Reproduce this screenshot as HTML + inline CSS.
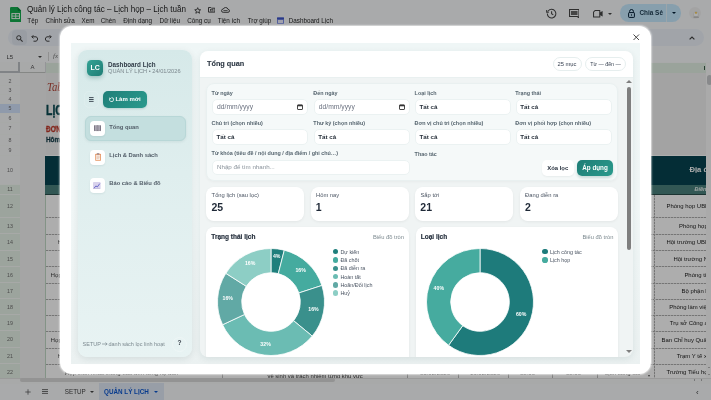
<!DOCTYPE html>
<html><head><meta charset="utf-8">
<style>
*{box-sizing:border-box;margin:0;padding:0}
html,body{width:711px;height:400px;overflow:hidden}
body{position:relative;background:#f9fbfd;font-family:"Liberation Sans",sans-serif;color:#1f1f1f}
.a{position:absolute}
.nw{white-space:nowrap}
#sheet{position:absolute;left:0;top:0;width:711px;height:400px;overflow:hidden}
#overlay{position:absolute;left:0;top:0;width:711px;height:400px;background:rgba(0,0,0,0.32)}
</style></head><body>
<div id="wrap" style="position:absolute;left:0;top:0;width:711px;height:400px;will-change:transform">
<div id="sheet">
  <!-- logo -->
  <svg class="a" style="left:9.6px;top:6.7px" width="11.5" height="15.3" viewBox="0 0 11.5 15.3"><path d="M0 1.2Q0 0 1.2 0H7.6L11.5 3.9V14.1Q11.5 15.3 10.3 15.3H1.2Q0 15.3 0 14.1Z" fill="#14ad4f"/><path d="M7.6 0L11.5 3.9H8.6Q7.6 3.9 7.6 2.9Z" fill="#0c8a3c"/><rect x="1.9" y="6.6" width="7.6" height="5" fill="none" stroke="#f2fbf5" stroke-width="1"/><path d="M1.9 9.1H9.5M5.7 6.6V11.6" stroke="#f2fbf5" stroke-width="0.9"/></svg>
  <div class="a nw" style="left:27px;top:4.3px;font-size:8.9px;line-height:11px;color:#1f1f1f;transform:scaleX(.91);transform-origin:0 0">Quản lý Lịch công tác – Lịch họp – Lịch tuần</div>
  <!-- star folder cloud -->
  <svg class="a" style="left:193.5px;top:6.8px" width="7.4" height="7" viewBox="0 0 10 9.5"><path d="M5 0.9L6.1 3.6L9 3.8L6.8 5.6L7.5 8.5L5 6.9L2.5 8.5L3.2 5.6L1 3.8L3.9 3.6Z" fill="none" stroke="#3a3a3a" stroke-width="1.2" stroke-linejoin="round"/></svg>
  <svg class="a" style="left:207.6px;top:7.4px" width="7.4" height="5.6" viewBox="0 0 7.4 5.6"><path d="M0.5 0.5H2.8L3.5 1.2H6.9V5.1H0.5Z" fill="none" stroke="#3a3a3a" stroke-width="0.95"/><rect x="2.4" y="2.4" width="2.6" height="1.6" fill="none" stroke="#3a3a3a" stroke-width=".6"/></svg>
  <svg class="a" style="left:221.2px;top:7.2px" width="9" height="5.8" viewBox="0 0 9 5.8"><path d="M2.2 5.3H7Q8.5 5.3 8.5 3.8Q8.5 2.5 7.1 2.4Q6.6 0.5 4.6 0.5Q3 0.5 2.3 2Q0.5 2.2 0.5 3.7Q0.5 5.3 2.2 5.3Z" fill="none" stroke="#3a3a3a" stroke-width="0.95"/><path d="M2.4 3.6H6.6" stroke="#3a3a3a" stroke-width=".8"/></svg>
  <!-- menu -->
  <div class="a nw" style="top:16.5px;font-size:6.3px;line-height:8px;color:#1f1f1f;left:0;width:400px">
    <span class="a" style="left:27.3px">Tệp</span>
    <span class="a" style="left:45.6px">Chỉnh sửa</span>
    <span class="a" style="left:81.5px">Xem</span>
    <span class="a" style="left:100.8px">Chèn</span>
    <span class="a" style="left:123.3px">Định dạng</span>
    <span class="a" style="left:159.6px">Dữ liệu</span>
    <span class="a" style="left:187.2px">Công cụ</span>
    <span class="a" style="left:217.8px">Tiện ích</span>
    <span class="a" style="left:247.7px">Trợ giúp</span>
    <span class="a" style="left:288.8px">Dashboard Lịch</span>
  </div>
  <svg class="a" style="left:277px;top:16.5px" width="7" height="7" viewBox="0 0 7 7"><rect x="0" y="0.5" width="7" height="6.5" rx="1" fill="#7b8ee6"/><rect x="0" y="0.5" width="7" height="1.8" fill="#3d54c9"/><rect x="1" y="3" width="5" height="3.2" fill="#eef"/></svg>
  <!-- right icons -->
  <svg class="a" style="left:546px;top:8px" width="11" height="11" viewBox="0 0 11 11"><path d="M2.2 3A4.3 4.3 0 1 1 1.3 5.6" fill="none" stroke="#444" stroke-width="1.05"/><path d="M0.7 2V4.1H2.8" fill="none" stroke="#444" stroke-width="1.05"/><path d="M5.6 3.2V5.7L7.3 6.9" fill="none" stroke="#444" stroke-width="1.05"/></svg>
  <svg class="a" style="left:568.5px;top:8.7px" width="10.5" height="9.5" viewBox="0 0 10.5 9.5"><path d="M0.55 0.55H9.95V8.9L8.4 7.5H0.55Z" fill="none" stroke="#444" stroke-width="1.05"/><rect x="2" y="2" width="6.5" height="4" fill="#666"/></svg>
  <svg class="a" style="left:592.5px;top:10px" width="10" height="7.5" viewBox="0 0 10 7.5"><path d="M2 0.55H6.8V6.95H0.55V2Z" fill="none" stroke="#444" stroke-width="1.05" stroke-linejoin="round"/><path d="M6.8 2.6L9.6 1V6.5L6.8 4.9" fill="#444"/></svg>
  <div class="a" style="left:607.5px;top:12.6px;width:0;height:0;border-left:2px solid transparent;border-right:2px solid transparent;border-top:2.2px solid #444"></div>
  <div class="a" style="left:620.1px;top:4.3px;width:60.7px;height:17.3px;border-radius:8.65px;background:#c8ebff"></div>
  <div class="a" style="left:665.8px;top:4.4px;width:0.9px;height:17.2px;background:#e6f3fb"></div>
  <svg class="a" style="left:628px;top:8.5px" width="7" height="9" viewBox="0 0 7 9"><path d="M1.6 3.6V2.4A1.9 1.9 0 0 1 5.4 2.4V3.6" fill="none" stroke="#001d35" stroke-width="1"/><rect x="0.6" y="3.6" width="5.8" height="4.8" rx=".6" fill="none" stroke="#001d35" stroke-width="1"/><circle cx="3.5" cy="6" r=".7" fill="#001d35"/></svg>
  <div class="a nw" style="left:639.5px;top:9px;font-size:6.4px;line-height:8px;font-weight:700;color:#1c3a50">Chia Sẻ</div>
  <div class="a" style="left:671.5px;top:12.2px;width:0;height:0;border-left:2px solid transparent;border-right:2px solid transparent;border-top:2.2px solid #001d35"></div>
  <div class="a" style="left:689.4px;top:7.3px;width:12px;height:12px;border-radius:6px;background:#f1f1f1"></div>
  <svg class="a" style="left:690.5px;top:8.5px" width="10" height="10" viewBox="0 0 10 10"><path d="M3 7.5Q1.5 5 3.5 3Q5 1.5 6.5 3Q8 5 7 7.5Z" fill="#fff" stroke="#cfcfcf" stroke-width=".5"/><circle cx="5" cy="3.8" r=".9" fill="#f2b81d"/><path d="M2.5 8.2H7.8" stroke="#9a9a9a" stroke-width=".7"/></svg>
  <!-- toolbar -->
  <div class="a" style="left:7.7px;top:29.2px;width:695.9px;height:17px;border-radius:8.5px;background:#edf2fa"></div>
  <div class="a" style="left:12px;top:30.2px;width:14.6px;height:15px;border-radius:4px;background:#e2e8f1"></div>
  <svg class="a" style="left:15.6px;top:34.6px" width="7" height="7" viewBox="0 0 7 7"><circle cx="2.8" cy="2.8" r="2.1" fill="none" stroke="#444" stroke-width="1"/><path d="M4.3 4.3L6.6 6.6" stroke="#444" stroke-width="1.1"/></svg>
  <svg class="a" style="left:31px;top:33.6px" width="8" height="8" viewBox="0 0 8 8"><path d="M2.4 1.2L0.8 2.8L2.4 4.4" fill="none" stroke="#444" stroke-width="1"/><path d="M0.8 2.8H5A2.3 2.3 0 0 1 5 7.2H2.5" fill="none" stroke="#444" stroke-width="1"/></svg>
  <svg class="a" style="left:44px;top:33.6px" width="8" height="8" viewBox="0 0 8 8"><path d="M5.6 1.2L7.2 2.8L5.6 4.4" fill="none" stroke="#444" stroke-width="1"/><path d="M7.2 2.8H3A2.3 2.3 0 0 0 3 7.2H5.5" fill="none" stroke="#444" stroke-width="1"/></svg>
  <svg class="a" style="left:688.8px;top:35.8px" width="6" height="4" viewBox="0 0 6 4"><path d="M0.6 3.4L3 1L5.4 3.4" fill="none" stroke="#444" stroke-width="1.2"/></svg>
  <!-- name box row -->
  <div class="a nw" style="left:6.5px;top:52.5px;font-size:6px;line-height:8px;color:#444">L5</div>
  <div class="a" style="left:38px;top:55.5px;width:0;height:0;border-left:2px solid transparent;border-right:2px solid transparent;border-top:2.2px solid #444"></div>
  <div class="a" style="left:47.5px;top:52px;width:0.8px;height:8.5px;background:#d5d5d5"></div>
  <div class="a nw" style="left:53px;top:51.5px;font-size:7px;line-height:9px;color:#777;font-style:italic;font-family:'Liberation Serif',serif">fx</div>
  <!-- column header row -->
  <div class="a" style="left:0;top:62.2px;width:711px;height:11px;background:#f8f9fa;border-bottom:1px solid #c4c7c5"></div>
  <div class="a" style="left:0;top:62.2px;width:20px;height:11px;background:#f8f9fa;border-right:2.5px solid #bdc1c6;border-bottom:2px solid #bdc1c6"></div>
  <div class="a" style="left:20px;top:62.2px;width:25.5px;height:11px;border-right:1px solid #dadce0"></div>
  <div class="a nw" style="left:30.5px;top:64.3px;font-size:6px;line-height:7px;color:#555">A</div>
  <div class="a" style="left:45.5px;top:62.6px;width:660.5px;height:10.6px;background:#e3f1e5"></div>
  <div class="a" style="left:703.6px;top:65.5px;width:0.9px;height:4px;background:#3a5a48"></div>
  <!-- row header column -->
  <div id="rh" class="a" style="left:0;top:73.2px;width:20px;height:310px;background:#f8f9fa;border-right:1px solid #c4c7c5"></div>
  <!-- column A body -->
  <div class="a" style="left:20px;top:73.2px;width:25.5px;height:305px;background:#f3f3f3"></div>
  <div class="a" style="left:44.8px;top:185px;width:1.1px;height:193px;background:#c2d9c6"></div>
  <!-- column B+ body -->
  <div class="a" style="left:46px;top:73.2px;width:660px;height:305px;background:#fff"></div>
  <div class="a" style="left:45.5px;top:73.2px;width:660.5px;height:82.3px;background:#f1f1f1"></div>
  <!-- text content in B -->
  <div class="a nw" style="left:46.8px;top:78.5px;font-size:13px;line-height:16px;color:#b5473a;font-style:italic;font-family:'Liberation Serif',serif;transform:scaleX(.82);transform-origin:0 0">Tab</div>
  <div class="a nw" style="left:46.3px;top:101px;font-size:14.5px;line-height:18px;color:#0b4a52;font-weight:700;-webkit-text-stroke:.45px #0b4a52;transform:scaleX(.72);transform-origin:0 0">LỊCH</div>
  <div class="a nw" style="left:46.3px;top:124.2px;font-size:8.3px;line-height:10px;color:#c0392b;font-weight:700;-webkit-text-stroke:.3px #c0392b;transform:scaleX(.78);transform-origin:0 0">ĐƠN</div>
  <div class="a nw" style="left:46.3px;top:135.3px;font-size:8px;line-height:10px;color:#153e4a;font-weight:700;-webkit-text-stroke:.3px #153e4a;transform:scaleX(.8);transform-origin:0 0">Hôm</div>
  <!-- dark header block -->
  <div class="a" style="left:44.8px;top:155.5px;width:661.2px;height:29.5px;background:#064350"></div>
  <div class="a nw" style="left:689.5px;top:165.2px;font-size:7.6px;line-height:9px;color:#fff;font-weight:700">Địa đ</div>
  <div class="a" style="left:44.8px;top:185px;width:661.2px;height:9.5px;background:#4a807d;border-bottom:1px solid #2a4d4a"></div>
  <div class="a nw" style="left:694.5px;top:186px;font-size:5.5px;line-height:7px;color:#e8f2ef;font-style:italic;font-weight:700">Điền</div>
<div class="a" style="left:0;top:73.20px;width:20px;height:3.00px;background:#f8f9fa;border-bottom:1px solid #f7f9f7"></div>
<div class="a" style="left:0;top:76.20px;width:20px;height:10.00px;background:#f8f9fa;border-bottom:1px solid #f7f9f7"></div>
<div class="a" style="left:0;top:76.20px;width:20px;height:10.00px;line-height:10.00px;font-size:5.3px;color:#707070;text-align:center">2</div>
<div class="a" style="left:0;top:86.20px;width:20px;height:9.00px;background:#f8f9fa;border-bottom:1px solid #f7f9f7"></div>
<div class="a" style="left:0;top:86.20px;width:20px;height:9.00px;line-height:9.00px;font-size:5.3px;color:#707070;text-align:center">3</div>
<div class="a" style="left:0;top:95.20px;width:20px;height:9.00px;background:#f8f9fa;border-bottom:1px solid #f7f9f7"></div>
<div class="a" style="left:0;top:95.20px;width:20px;height:9.00px;line-height:9.00px;font-size:5.3px;color:#707070;text-align:center">4</div>
<div class="a" style="left:0;top:104.20px;width:20px;height:9.50px;background:#d3e3fd;border-bottom:1px solid #f7f9f7"></div>
<div class="a" style="left:0;top:104.20px;width:20px;height:9.50px;line-height:9.50px;font-size:5.3px;color:#707070;text-align:center">5</div>
<div class="a" style="left:0;top:113.70px;width:20px;height:9.30px;background:#f8f9fa;border-bottom:1px solid #f7f9f7"></div>
<div class="a" style="left:0;top:113.70px;width:20px;height:9.30px;line-height:9.30px;font-size:5.3px;color:#707070;text-align:center">6</div>
<div class="a" style="left:0;top:123.00px;width:20px;height:11.50px;background:#f8f9fa;border-bottom:1px solid #f7f9f7"></div>
<div class="a" style="left:0;top:123.00px;width:20px;height:11.50px;line-height:11.50px;font-size:5.3px;color:#707070;text-align:center">7</div>
<div class="a" style="left:0;top:134.50px;width:20px;height:11.50px;background:#f8f9fa;border-bottom:1px solid #f7f9f7"></div>
<div class="a" style="left:0;top:134.50px;width:20px;height:11.50px;line-height:11.50px;font-size:5.3px;color:#707070;text-align:center">8</div>
<div class="a" style="left:0;top:146.00px;width:20px;height:9.50px;background:#f8f9fa;border-bottom:1px solid #f7f9f7"></div>
<div class="a" style="left:0;top:146.00px;width:20px;height:9.50px;line-height:9.50px;font-size:5.3px;color:#707070;text-align:center">9</div>
<div class="a" style="left:0;top:155.50px;width:20px;height:29.50px;background:#f8f9fa;border-bottom:1px solid #f7f9f7"></div>
<div class="a" style="left:0;top:155.50px;width:20px;height:29.50px;line-height:29.50px;font-size:5.3px;color:#707070;text-align:center">10</div>
<div class="a" style="left:0;top:185.00px;width:20px;height:9.50px;background:#e6f2e7;border-bottom:1px solid #f7f9f7"></div>
<div class="a" style="left:0;top:185.00px;width:20px;height:9.50px;line-height:9.50px;font-size:5.3px;color:#707070;text-align:center">11</div>
<div class="a" style="left:0;top:194.50px;width:20px;height:23.00px;background:#e6f2e7;border-bottom:1px solid #f7f9f7"></div>
<div class="a" style="left:0;top:194.50px;width:20px;height:23.00px;line-height:23.00px;font-size:5.3px;color:#707070;text-align:center">12</div>
<div class="a" style="left:0;top:217.50px;width:20px;height:16.75px;background:#e6f2e7;border-bottom:1px solid #f7f9f7"></div>
<div class="a" style="left:0;top:217.50px;width:20px;height:16.75px;line-height:16.75px;font-size:5.3px;color:#707070;text-align:center">13</div>
<div class="a" style="left:0;top:234.25px;width:20px;height:16.25px;background:#e6f2e7;border-bottom:1px solid #f7f9f7"></div>
<div class="a" style="left:0;top:234.25px;width:20px;height:16.25px;line-height:16.25px;font-size:5.3px;color:#707070;text-align:center">14</div>
<div class="a" style="left:0;top:250.50px;width:20px;height:16.00px;background:#e6f2e7;border-bottom:1px solid #f7f9f7"></div>
<div class="a" style="left:0;top:250.50px;width:20px;height:16.00px;line-height:16.00px;font-size:5.3px;color:#707070;text-align:center">15</div>
<div class="a" style="left:0;top:266.50px;width:20px;height:16.75px;background:#e6f2e7;border-bottom:1px solid #f7f9f7"></div>
<div class="a" style="left:0;top:266.50px;width:20px;height:16.75px;line-height:16.75px;font-size:5.3px;color:#707070;text-align:center">16</div>
<div class="a" style="left:0;top:283.25px;width:20px;height:16.05px;background:#e6f2e7;border-bottom:1px solid #f7f9f7"></div>
<div class="a" style="left:0;top:283.25px;width:20px;height:16.05px;line-height:16.05px;font-size:5.3px;color:#707070;text-align:center">17</div>
<div class="a" style="left:0;top:299.30px;width:20px;height:16.00px;background:#e6f2e7;border-bottom:1px solid #f7f9f7"></div>
<div class="a" style="left:0;top:299.30px;width:20px;height:16.00px;line-height:16.00px;font-size:5.3px;color:#707070;text-align:center">18</div>
<div class="a" style="left:0;top:315.30px;width:20px;height:16.10px;background:#e6f2e7;border-bottom:1px solid #f7f9f7"></div>
<div class="a" style="left:0;top:315.30px;width:20px;height:16.10px;line-height:16.10px;font-size:5.3px;color:#707070;text-align:center">19</div>
<div class="a" style="left:0;top:331.40px;width:20px;height:16.60px;background:#e6f2e7;border-bottom:1px solid #f7f9f7"></div>
<div class="a" style="left:0;top:331.40px;width:20px;height:16.60px;line-height:16.60px;font-size:5.3px;color:#707070;text-align:center">20</div>
<div class="a" style="left:0;top:348.00px;width:20px;height:16.00px;background:#e6f2e7;border-bottom:1px solid #f7f9f7"></div>
<div class="a" style="left:0;top:348.00px;width:20px;height:16.00px;line-height:16.00px;font-size:5.3px;color:#707070;text-align:center">21</div>
<div class="a" style="left:0;top:364.00px;width:20px;height:16.50px;background:#e6f2e7;border-bottom:1px solid #f7f9f7"></div>
<div class="a" style="left:0;top:364.00px;width:20px;height:16.50px;line-height:16.50px;font-size:5.3px;color:#707070;text-align:center">22</div>
<div class="a" style="left:46px;top:217px;width:20px;height:1px;background:repeating-linear-gradient(90deg,#adadad 0 2px,#e2e2e2 2px 3px)"></div>
<div class="a" style="left:650px;top:217px;width:56px;height:1px;background:repeating-linear-gradient(90deg,#adadad 0 2px,#e2e2e2 2px 3px)"></div>
<div class="a" style="left:46px;top:234px;width:20px;height:1px;background:repeating-linear-gradient(90deg,#adadad 0 2px,#e2e2e2 2px 3px)"></div>
<div class="a" style="left:650px;top:234px;width:56px;height:1px;background:repeating-linear-gradient(90deg,#adadad 0 2px,#e2e2e2 2px 3px)"></div>
<div class="a" style="left:46px;top:250px;width:20px;height:1px;background:repeating-linear-gradient(90deg,#adadad 0 2px,#e2e2e2 2px 3px)"></div>
<div class="a" style="left:650px;top:250px;width:56px;height:1px;background:repeating-linear-gradient(90deg,#adadad 0 2px,#e2e2e2 2px 3px)"></div>
<div class="a" style="left:46px;top:266px;width:20px;height:1px;background:repeating-linear-gradient(90deg,#adadad 0 2px,#e2e2e2 2px 3px)"></div>
<div class="a" style="left:650px;top:266px;width:56px;height:1px;background:repeating-linear-gradient(90deg,#adadad 0 2px,#e2e2e2 2px 3px)"></div>
<div class="a" style="left:46px;top:283px;width:20px;height:1px;background:repeating-linear-gradient(90deg,#adadad 0 2px,#e2e2e2 2px 3px)"></div>
<div class="a" style="left:650px;top:283px;width:56px;height:1px;background:repeating-linear-gradient(90deg,#adadad 0 2px,#e2e2e2 2px 3px)"></div>
<div class="a" style="left:46px;top:299px;width:20px;height:1px;background:repeating-linear-gradient(90deg,#adadad 0 2px,#e2e2e2 2px 3px)"></div>
<div class="a" style="left:650px;top:299px;width:56px;height:1px;background:repeating-linear-gradient(90deg,#adadad 0 2px,#e2e2e2 2px 3px)"></div>
<div class="a" style="left:46px;top:315px;width:20px;height:1px;background:repeating-linear-gradient(90deg,#adadad 0 2px,#e2e2e2 2px 3px)"></div>
<div class="a" style="left:650px;top:315px;width:56px;height:1px;background:repeating-linear-gradient(90deg,#adadad 0 2px,#e2e2e2 2px 3px)"></div>
<div class="a" style="left:46px;top:331px;width:20px;height:1px;background:repeating-linear-gradient(90deg,#adadad 0 2px,#e2e2e2 2px 3px)"></div>
<div class="a" style="left:650px;top:331px;width:56px;height:1px;background:repeating-linear-gradient(90deg,#adadad 0 2px,#e2e2e2 2px 3px)"></div>
<div class="a" style="left:46px;top:348px;width:20px;height:1px;background:repeating-linear-gradient(90deg,#adadad 0 2px,#e2e2e2 2px 3px)"></div>
<div class="a" style="left:650px;top:348px;width:56px;height:1px;background:repeating-linear-gradient(90deg,#adadad 0 2px,#e2e2e2 2px 3px)"></div>
<div class="a" style="left:46px;top:364px;width:20px;height:1px;background:repeating-linear-gradient(90deg,#adadad 0 2px,#e2e2e2 2px 3px)"></div>
<div class="a" style="left:650px;top:364px;width:56px;height:1px;background:repeating-linear-gradient(90deg,#adadad 0 2px,#e2e2e2 2px 3px)"></div>
<div class="a" style="left:46px;top:380px;width:20px;height:1px;background:repeating-linear-gradient(90deg,#adadad 0 2px,#e2e2e2 2px 3px)"></div>
<div class="a" style="left:650px;top:380px;width:56px;height:1px;background:repeating-linear-gradient(90deg,#adadad 0 2px,#e2e2e2 2px 3px)"></div>
<div class="a" style="left:654px;top:194.5px;width:1px;height:184px;background:repeating-linear-gradient(180deg,#adadad 0 2px,#e2e2e2 2px 3px)"></div>
<div class="a" style="left:0;top:0;width:706px;height:378px;overflow:hidden">
<div class="a nw" style="left:666.5px;top:202.00px;font-size:5.95px;line-height:8px;color:#222">Phòng họp UBN</div>
<div class="a nw" style="left:679px;top:221.88px;font-size:5.95px;line-height:8px;color:#222">Phòng họp</div>
<div class="a nw" style="left:666.5px;top:238.38px;font-size:5.95px;line-height:8px;color:#222">Hội trường UBN</div>
<div class="a nw" style="left:673.4px;top:254.50px;font-size:5.95px;line-height:8px;color:#222">Hội trường N</div>
<div class="a nw" style="left:684.4px;top:270.88px;font-size:5.95px;line-height:8px;color:#222">Phòng ti</div>
<div class="a nw" style="left:681.6px;top:287.27px;font-size:5.95px;line-height:8px;color:#222">Bộ phận l</div>
<div class="a nw" style="left:669.3px;top:303.30px;font-size:5.95px;line-height:8px;color:#222">Phòng làm việc</div>
<div class="a nw" style="left:669.8px;top:319.35px;font-size:5.95px;line-height:8px;color:#222">Trụ sở Công an</div>
<div class="a nw" style="left:661.5px;top:335.70px;font-size:5.95px;line-height:8px;color:#222">Ban Chỉ huy Quân</div>
<div class="a nw" style="left:676.7px;top:352.00px;font-size:5.95px;line-height:8px;color:#222">Trạm Y tế x</div>
<div class="a nw" style="left:666.5px;top:368.25px;font-size:5.95px;line-height:8px;color:#222">Trường Tiểu học</div>
<div class="a nw" style="left:57.5px;top:238.4px;font-size:6.2px;line-height:8px;color:#444">Họp</div>
<div class="a nw" style="left:50.5px;top:270.9px;font-size:6.2px;line-height:8px;color:#444">Họp</div>
<div class="a nw" style="left:50.5px;top:335.7px;font-size:6.2px;line-height:8px;color:#444">Họp</div>
<div class="a nw" style="left:57.5px;top:352px;font-size:6.2px;line-height:8px;color:#444">Họp</div>
<div class="a" style="left:60px;top:364px;width:162px;height:14px;overflow:hidden"><div class="a nw" style="left:5px;top:5px;font-size:6px;line-height:8px;color:#333">Họp thôn nhắc thông báo đến từng hộ dân</div></div>
<div class="a" style="left:222px;top:372px;width:1px;height:6px;background:#bbb"></div>
<div class="a nw" style="left:267.5px;top:372.2px;font-size:5.9px;line-height:8px;color:#333">vệ sinh và trách nhiệm từng khu vực</div>
<div class="a nw" style="left:420px;top:368.5px;font-size:6px;line-height:8px;color:#333">01/02/2026</div>
<div class="a nw" style="left:470px;top:368.5px;font-size:6px;line-height:8px;color:#333">16/02/2026</div>
<div class="a nw" style="left:520px;top:368.5px;font-size:6px;line-height:8px;color:#333">08:00</div>
<div class="a nw" style="left:566px;top:368.5px;font-size:6px;line-height:8px;color:#333">08:00</div>
<div class="a nw" style="left:605px;top:368.5px;font-size:6px;line-height:8px;color:#333">Lịch công tác</div>
<div class="a" style="left:406.6px;top:372px;width:1px;height:6px;background:#bbb"></div>
<div class="a" style="left:458px;top:372px;width:1px;height:6px;background:#bbb"></div>
<div class="a" style="left:507.6px;top:372px;width:1px;height:6px;background:#bbb"></div>
<div class="a" style="left:551.7px;top:372px;width:1px;height:6px;background:#bbb"></div>
<div class="a" style="left:596.8px;top:372px;width:1px;height:6px;background:#bbb"></div>
<div class="a" style="left:647.5px;top:374.5px;width:0;height:0;border-left:1.8px solid transparent;border-right:1.8px solid transparent;border-top:2px solid #555"></div>
</div>
<div class="a" style="left:706px;top:62.6px;width:5px;height:315px;background:#fbfbfb"></div>
<div class="a" style="left:706.7px;top:74.7px;width:5px;height:10.6px;border-radius:2.5px;background:#c9cbcd"></div>
<div class="a" style="left:0;top:377.5px;width:711px;height:6px;background:#f8f9fa;border-top:1px solid #e3e3e3"></div>
<div class="a" style="left:20px;top:378.3px;width:315px;height:4.2px;border-radius:2.1px;background:#d9d9d9"></div>
<div class="a" style="left:693.5px;top:379.3px;width:0;height:0;border-top:1.3px solid transparent;border-bottom:1.3px solid transparent;border-right:1.6px solid #666"></div>
<div class="a" style="left:700.5px;top:379.3px;width:0;height:0;border-top:1.3px solid transparent;border-bottom:1.3px solid transparent;border-left:1.6px solid #666"></div>
<div class="a" style="left:707.8px;top:366.5px;width:0;height:0;border-left:1.3px solid transparent;border-right:1.3px solid transparent;border-bottom:1.6px solid #777"></div>
<div class="a" style="left:707.8px;top:373.5px;width:0;height:0;border-left:1.3px solid transparent;border-right:1.3px solid transparent;border-top:1.6px solid #777"></div>
<div class="a" style="left:0;top:383.5px;width:711px;height:16.5px;background:#f9fbfd"></div>
<svg class="a" style="left:24.6px;top:388.5px" width="6" height="6" viewBox="0 0 6 6"><path d="M3 0.3V5.7M0.3 3H5.7" stroke="#555" stroke-width=".75"/></svg>
<svg class="a" style="left:41.5px;top:388.9px" width="6" height="5" viewBox="0 0 6 5"><path d="M0 0.6H6M0 2.5H6M0 4.4H6" stroke="#555" stroke-width=".85"/></svg>
<div class="a nw" style="left:64.8px;top:387.6px;font-size:6.3px;line-height:8px;color:#444">SETUP</div>
<div class="a" style="left:89.5px;top:390.8px;width:0;height:0;border-left:2px solid transparent;border-right:2px solid transparent;border-top:2.2px solid #444"></div>
<div class="a" style="left:99.4px;top:383.4px;width:64.2px;height:16.6px;background:#e1e9f7"></div>
<div class="a nw" style="left:104px;top:387.5px;font-size:6.3px;line-height:8px;color:#0b57d0;font-weight:700">QUẢN LÝ LỊCH</div>
<div class="a" style="left:154.4px;top:390.6px;width:0;height:0;border-left:2px solid transparent;border-right:2px solid transparent;border-top:2.2px solid #0b57d0"></div>
<div class="a nw" style="left:696px;top:388px;font-size:8px;line-height:9px;color:#444">‹</div>
</div>
<div id="overlay"></div>
<div class="a" style="left:60.2px;top:25.8px;width:590.4px;height:348.3px;background:#fff;border-radius:12px;box-shadow:0 0 1.5px 0.6px rgba(255,255,255,.55)"></div>
<div class="a" style="left:70.5px;top:43px;width:569.5px;height:320.5px;background:linear-gradient(180deg,#eff6f6 0%,#f1f7f7 50%,#ebf1f1 100%)"></div>
<svg class="a" style="left:633px;top:33.5px" width="6.5" height="6.5" viewBox="0 0 6.5 6.5"><path d="M0.5 0.5L6 6M6 0.5L0.5 6" stroke="#3c3c3c" stroke-width="0.95"/></svg>
<div class="a" style="left:77.5px;top:50px;width:114px;height:306.5px;border-radius:9px;background:linear-gradient(180deg,#d6e9e9 0%,#dfeeee 40%,#e8f3f3 100%);box-shadow:0 2px 7px rgba(0,50,50,.10)"></div>
<div class="a" style="left:87.4px;top:60px;width:15.6px;height:15.6px;border-radius:4.5px;background:linear-gradient(135deg,#34a395,#1f7d75);box-shadow:0 2px 4px rgba(20,100,90,.3)"></div>
<div class="a nw" style="left:87.4px;top:63.8px;width:15.6px;text-align:center;font-size:7px;line-height:8px;font-weight:700;color:#fff">LC</div>
<div class="a nw" style="left:108px;top:61px;font-size:6.3px;line-height:8px;font-weight:700;color:#2f3a46">Dashboard Lịch</div>
<div class="a nw" style="left:108px;top:67.2px;font-size:5.65px;line-height:8px;color:#7b878d">QUẢN LÝ LỊCH • 24/01/2026</div>
<div class="a" style="left:84px;top:91px;width:15px;height:16.5px;border-radius:5px;border:1px solid rgba(255,255,255,.12)"></div>
<svg class="a" style="left:89.3px;top:96.8px" width="4.6" height="5" viewBox="0 0 4.6 5"><path d="M0 0.6H4.6M0 2.5H4.6M0 4.4H4.6" stroke="#3a4550" stroke-width="0.95"/></svg>
<div class="a" style="left:103.4px;top:91px;width:43.2px;height:16.6px;border-radius:5px;background:linear-gradient(135deg,#1f7f78,#2a9a8d);box-shadow:0 1px 2px rgba(20,100,90,.18)"></div>
<div class="a nw" style="left:115.4px;top:95.2px;font-size:6px;line-height:8px;font-weight:700;color:#fff">Làm mới</div>
<svg class="a" style="left:109px;top:96.6px" width="5" height="5" viewBox="0 0 5 5"><path d="M0.9 1.5A2 2 0 1 0 2.5 0.6" fill="none" stroke="#fff" stroke-width="0.8"/><path d="M0.2 0.5L1.1 2L2.2 0.9" fill="none" stroke="#fff" stroke-width="0.7"/></svg>
<div class="a" style="left:85px;top:116.25px;width:100.5px;height:24.25px;border-radius:6px;background:#c4dfdf;border:1px solid #b8d7d7;box-shadow:0 1px 3px rgba(0,70,70,.08)"></div>
<div class="a" style="left:90px;top:121px;width:14.5px;height:14.5px;border-radius:4px;background:#fff;box-shadow:0 1px 2px rgba(0,60,60,.08)"></div>
<div class="a nw" style="left:109.25px;top:123.3px;font-size:5.8px;line-height:8px;font-weight:700;color:#525d68">Tổng quan</div>
<div class="a" style="left:90px;top:150px;width:14.5px;height:14.5px;border-radius:4px;background:#fff;box-shadow:0 1px 2px rgba(0,60,60,.08)"></div>
<div class="a nw" style="left:109.25px;top:151.4px;font-size:5.8px;line-height:8px;font-weight:700;color:#525d68">Lịch &amp; Danh sách</div>
<div class="a" style="left:90px;top:178px;width:14.5px;height:14.5px;border-radius:4px;background:#fff;box-shadow:0 1px 2px rgba(0,60,60,.08)"></div>
<div class="a nw" style="left:109.25px;top:179.1px;font-size:5.8px;line-height:8px;font-weight:700;color:#525d68">Báo cáo &amp; Biểu đồ</div>
<svg class="a" style="left:93.9px;top:125.4px" width="7" height="6.2" viewBox="0 0 7 5.6" preserveAspectRatio="none"><path d="M0 0.6L0.7 0L1.4 0.6L2.1 0L2.8 0.6L3.5 0L4.2 0.6L4.9 0L5.6 0.6L6.3 0L7 0.6V5L6.3 5.6L5.6 5L4.9 5.6L4.2 5L3.5 5.6L2.8 5L2.1 5.6L1.4 5L0.7 5.6L0 5Z" fill="#77717f"/><path d="M1.4 0.8V4.8M2.8 0.8V4.8M4.2 0.8V4.8M5.6 0.8V4.8" stroke="#d6d1da" stroke-width=".6"/></svg>
<svg class="a" style="left:94.6px;top:153px" width="6.2" height="8.2" viewBox="0 0 6.2 8.2"><rect x="0.35" y="0.8" width="5.5" height="7.05" rx=".7" fill="#e2844a"/><rect x="1.05" y="1.7" width="4.1" height="5.5" fill="#f7ece3"/><rect x="1.9" y="0.2" width="2.4" height="1.4" rx=".4" fill="#8b8290"/><path d="M1.6 3.2H4.6M1.6 4.4H4.6M1.6 5.6H3.8" stroke="#d9a890" stroke-width=".45"/></svg>
<svg class="a" style="left:93.4px;top:182px" width="7.6" height="7.4" viewBox="0 0 7.6 7.4"><rect x="0" y="0" width="7.6" height="7.4" rx=".9" fill="#d9d2ec"/><path d="M1 6.3L2.9 3.9L4.3 5L6.8 1.6" fill="none" stroke="#5a58c4" stroke-width=".85"/><path d="M0.8 6.6H6.8" stroke="#a9a3c8" stroke-width=".4"/></svg>
<div class="a nw" style="left:82.6px;top:340px;font-size:5.5px;line-height:8px;color:#7d8a90">SETUP &nbsp;&nbsp;&nbsp;&nbsp;danh sách lọc linh hoạt</div>
<svg class="a" style="left:102.3px;top:342px" width="6" height="4" viewBox="0 0 6 4"><path d="M0 2H5M3.4 0.6L5.2 2L3.4 3.4" fill="none" stroke="#7d8a90" stroke-width=".7"/></svg>
<div class="a" style="left:172px;top:336.5px;width:15px;height:15px;border-radius:7.5px;border:1px solid rgba(255,255,255,.25)"></div>
<div class="a nw" style="left:172px;top:339.2px;width:15px;text-align:center;font-size:6.6px;line-height:8px;font-weight:700;color:#3a424c">?</div>
<div class="a" style="left:200px;top:50.5px;width:433px;height:306.5px;border-radius:8px;background:#f0f4f4;box-shadow:0 2px 7px rgba(0,50,50,.09);overflow:hidden">
<div class="a" style="left:0;top:0;width:433px;height:27px;background:#fff;border-bottom:1px solid #e9f0f0"></div>
</div>
<div class="a nw" style="left:207px;top:58.6px;font-size:7.3px;line-height:9px;font-weight:700;color:#2f3a46;-webkit-text-stroke:0.12px #2f3a46">Tổng quan</div>
<div class="a" style="left:552.5px;top:56.5px;width:29px;height:14px;border-radius:7px;background:#fff;border:1px solid #e6eeee"></div>
<div class="a nw" style="left:552.5px;top:59.5px;width:29px;text-align:center;font-size:5.8px;line-height:8px;color:#374151">25 mục</div>
<div class="a" style="left:585px;top:56.5px;width:41px;height:14px;border-radius:7px;background:#fff;border:1px solid #e6eeee"></div>
<div class="a nw" style="left:585px;top:59.5px;width:41px;text-align:center;font-size:5.3px;line-height:8px;color:#374151">Từ — đến —</div>
<div class="a" style="left:200px;top:77.5px;width:433px;height:279.5px;overflow:hidden;border-radius:0 0 8px 8px">
<div class="a" style="left:6.00px;top:5.50px;width:412px;height:98.3px;border-radius:8px;background:#f5f9f9;border:1px solid #e9f0f0;box-shadow:0 1px 3px rgba(0,0,0,.04)"></div>
<div class="a nw" style="left:11.60px;top:11.00px;font-size:5.4px;line-height:8px;font-weight:700;color:#56656f">Từ ngày</div>
<div class="a" style="left:12.00px;top:21.50px;width:96.25px;height:16px;border-radius:5px;background:#fff;border:1px solid #ebf2f2"></div>
<div class="a nw" style="left:17.00px;top:25.50px;font-size:6.75px;line-height:8px;color:#6b7280">dd/mm/yyyy</div>
<svg class="a" style="left:97.20px;top:26.50px" width="6" height="6" viewBox="0 0 6 6"><rect x="0.5" y="0.9" width="5" height="4.6" rx=".5" fill="none" stroke="#333" stroke-width=".9"/><rect x="0.5" y="0.9" width="5" height="1.4" fill="#333"/></svg>
<div class="a nw" style="left:113.35px;top:11.00px;font-size:5.4px;line-height:8px;font-weight:700;color:#56656f">Đến ngày</div>
<div class="a" style="left:113.75px;top:21.50px;width:96.25px;height:16px;border-radius:5px;background:#fff;border:1px solid #ebf2f2"></div>
<div class="a nw" style="left:118.75px;top:25.50px;font-size:6.75px;line-height:8px;color:#6b7280">dd/mm/yyyy</div>
<svg class="a" style="left:198.95px;top:26.50px" width="6" height="6" viewBox="0 0 6 6"><rect x="0.5" y="0.9" width="5" height="4.6" rx=".5" fill="none" stroke="#333" stroke-width=".9"/><rect x="0.5" y="0.9" width="5" height="1.4" fill="#333"/></svg>
<div class="a nw" style="left:214.60px;top:11.00px;font-size:5.4px;line-height:8px;font-weight:700;color:#56656f">Loại lịch</div>
<div class="a" style="left:215.00px;top:21.50px;width:96.25px;height:16px;border-radius:5px;background:#fff;border:1px solid #ebf2f2"></div>
<div class="a nw" style="left:219.50px;top:25.50px;font-size:6.2px;line-height:8px;font-weight:700;color:#27303b">Tất cả</div>
<div class="a nw" style="left:315.35px;top:11.00px;font-size:5.4px;line-height:8px;font-weight:700;color:#56656f">Trạng thái</div>
<div class="a" style="left:315.75px;top:21.50px;width:96.25px;height:16px;border-radius:5px;background:#fff;border:1px solid #ebf2f2"></div>
<div class="a nw" style="left:320.25px;top:25.50px;font-size:6.2px;line-height:8px;font-weight:700;color:#27303b">Tất cả</div>
<div class="a nw" style="left:11.60px;top:41.50px;font-size:5.4px;line-height:8px;font-weight:700;color:#56656f">Chủ trì (chọn nhiều)</div>
<div class="a" style="left:12.00px;top:51.50px;width:96.25px;height:16px;border-radius:5px;background:#fff;border:1px solid #ebf2f2"></div>
<div class="a nw" style="left:16.50px;top:55.50px;font-size:6.2px;line-height:8px;font-weight:700;color:#27303b">Tất cả</div>
<div class="a nw" style="left:113.35px;top:41.50px;font-size:5.4px;line-height:8px;font-weight:700;color:#56656f">Thư ký (chọn nhiều)</div>
<div class="a" style="left:113.75px;top:51.50px;width:96.25px;height:16px;border-radius:5px;background:#fff;border:1px solid #ebf2f2"></div>
<div class="a nw" style="left:118.25px;top:55.50px;font-size:6.2px;line-height:8px;font-weight:700;color:#27303b">Tất cả</div>
<div class="a nw" style="left:214.60px;top:41.50px;font-size:5.4px;line-height:8px;font-weight:700;color:#56656f">Đơn vị chủ trì (chọn nhiều)</div>
<div class="a" style="left:215.00px;top:51.50px;width:96.25px;height:16px;border-radius:5px;background:#fff;border:1px solid #ebf2f2"></div>
<div class="a nw" style="left:219.50px;top:55.50px;font-size:6.2px;line-height:8px;font-weight:700;color:#27303b">Tất cả</div>
<div class="a nw" style="left:315.35px;top:41.50px;font-size:5.4px;line-height:8px;font-weight:700;color:#56656f">Đơn vị phối hợp (chọn nhiều)</div>
<div class="a" style="left:315.75px;top:51.50px;width:96.25px;height:16px;border-radius:5px;background:#fff;border:1px solid #ebf2f2"></div>
<div class="a nw" style="left:320.25px;top:55.50px;font-size:6.2px;line-height:8px;font-weight:700;color:#27303b">Tất cả</div>
<div class="a nw" style="left:11.60px;top:71.90px;font-size:5.4px;line-height:8px;font-weight:700;color:#56656f">Từ khóa (tiêu đề / nội dung / địa điểm / ghi chú…)</div>
<div class="a nw" style="left:214.60px;top:72.00px;font-size:5.4px;line-height:8px;font-weight:700;color:#56656f">Thao tác</div>
<div class="a" style="left:12.00px;top:82.00px;width:197.5px;height:15.8px;border-radius:5px;background:#fff;border:1px solid #ebf2f2"></div>
<div class="a nw" style="left:17.00px;top:85.80px;font-size:6.2px;line-height:8px;color:#8a939b">Nhập để tìm nhanh...</div>
<div class="a" style="left:342.00px;top:82.00px;width:31.5px;height:16px;border-radius:5px;background:#fff;box-shadow:0 1px 2px rgba(0,40,40,.06)"></div>
<div class="a nw" style="left:342.00px;top:86.00px;width:31.5px;text-align:center;font-size:5.9px;line-height:8px;font-weight:700;color:#1f2937">Xóa lọc</div>
<div class="a" style="left:377.00px;top:82.00px;width:36px;height:16px;border-radius:5px;background:linear-gradient(135deg,#1e7d76,#2a9a8c);box-shadow:0 2px 3px rgba(20,100,90,.2)"></div>
<div class="a nw" style="left:377.00px;top:86.00px;width:36px;text-align:center;font-size:6.3px;line-height:8px;font-weight:700;color:#fff">Áp dụng</div>
<div class="a" style="left:6.20px;top:109.90px;width:98px;height:33.6px;border-radius:8px;background:#fff;box-shadow:0 1px 3px rgba(0,0,0,.06)"></div>
<div class="a nw" style="left:11.60px;top:113.50px;font-size:5.8px;line-height:8px;color:#4b5563">Tổng lịch (sau lọc)</div>
<div class="a nw" style="left:11.40px;top:123.20px;font-size:10.5px;line-height:12px;font-weight:700;color:#1f2937">25</div>
<div class="a" style="left:110.60px;top:109.90px;width:98px;height:33.6px;border-radius:8px;background:#fff;box-shadow:0 1px 3px rgba(0,0,0,.06)"></div>
<div class="a nw" style="left:116.00px;top:113.50px;font-size:5.8px;line-height:8px;color:#4b5563">Hôm nay</div>
<div class="a nw" style="left:115.80px;top:123.20px;font-size:10.5px;line-height:12px;font-weight:700;color:#1f2937">1</div>
<div class="a" style="left:215.10px;top:109.90px;width:98px;height:33.6px;border-radius:8px;background:#fff;box-shadow:0 1px 3px rgba(0,0,0,.06)"></div>
<div class="a nw" style="left:220.50px;top:113.50px;font-size:5.8px;line-height:8px;color:#4b5563">Sắp tới</div>
<div class="a nw" style="left:220.30px;top:123.20px;font-size:10.5px;line-height:12px;font-weight:700;color:#1f2937">21</div>
<div class="a" style="left:319.70px;top:109.90px;width:98px;height:33.6px;border-radius:8px;background:#fff;box-shadow:0 1px 3px rgba(0,0,0,.06)"></div>
<div class="a nw" style="left:325.10px;top:113.50px;font-size:5.8px;line-height:8px;color:#4b5563">Đang diễn ra</div>
<div class="a nw" style="left:324.90px;top:123.20px;font-size:10.5px;line-height:12px;font-weight:700;color:#1f2937">2</div>
<div class="a" style="left:6.00px;top:149.50px;width:202.5px;height:150px;border-radius:8px;background:#fff;box-shadow:0 1px 3px rgba(0,0,0,.06)"></div>
<div class="a nw" style="left:11.30px;top:155.70px;font-size:6.5px;line-height:8px;font-weight:700;color:#1f2937;-webkit-text-stroke:0.15px #1f2937">Trạng thái lịch</div>
<div class="a nw" style="left:156.00px;top:155.70px;width:48px;text-align:right;font-size:5.75px;line-height:8px;color:#7d8a90">Biểu đồ tròn</div>
<svg class="a" style="left:10.80px;top:164.80px" width="120" height="120" viewBox="210.8 242.3 120 120" font-family="Liberation Sans"><path d="M270.80 248.80A53.5 53.5 0 0 1 284.10 250.48L278.09 273.92A29.3 29.3 0 0 0 270.80 273.00Z" fill="#1f7f7c" stroke="#fff" stroke-width="0.8" stroke-linejoin="round"/><path d="M284.10 250.48A53.5 53.5 0 0 1 321.68 285.77L298.67 293.25A29.3 29.3 0 0 0 278.09 273.92Z" fill="#45ab9f" stroke="#fff" stroke-width="0.8" stroke-linejoin="round"/><path d="M321.68 285.77A53.5 53.5 0 0 1 312.02 336.40L293.38 320.98A29.3 29.3 0 0 0 298.67 293.25Z" fill="#3a908c" stroke="#fff" stroke-width="0.8" stroke-linejoin="round"/><path d="M312.02 336.40A53.5 53.5 0 0 1 222.39 325.08L244.29 314.78A29.3 29.3 0 0 0 293.38 320.98Z" fill="#6bbcb3" stroke="#fff" stroke-width="0.8" stroke-linejoin="round"/><path d="M222.39 325.08A53.5 53.5 0 0 1 225.63 273.63L246.06 286.60A29.3 29.3 0 0 0 244.29 314.78Z" fill="#61a9a5" stroke="#fff" stroke-width="0.8" stroke-linejoin="round"/><path d="M225.63 273.63A53.5 53.5 0 0 1 270.80 248.80L270.80 273.00A29.3 29.3 0 0 0 246.06 286.60Z" fill="#8dcec5" stroke="#fff" stroke-width="0.8" stroke-linejoin="round"/><text x="276.44" y="258.75" text-anchor="middle" font-size="5.2" font-weight="700" fill="#fff">4%</text><text x="300.44" y="271.84" text-anchor="middle" font-size="5.2" font-weight="700" fill="#fff">16%</text><text x="313.33" y="311.51" text-anchor="middle" font-size="5.2" font-weight="700" fill="#fff">16%</text><text x="265.37" y="346.36" text-anchor="middle" font-size="5.2" font-weight="700" fill="#fff">32%</text><text x="227.59" y="300.68" text-anchor="middle" font-size="5.2" font-weight="700" fill="#fff">16%</text><text x="249.94" y="265.46" text-anchor="middle" font-size="5.2" font-weight="700" fill="#fff">16%</text></svg>
<div class="a" style="left:132.80px;top:171.40px;width:5.6px;height:5.6px;border-radius:2.8px;background:#1f7f7c"></div>
<div class="a nw" style="left:140.40px;top:170.20px;font-size:5.4px;line-height:8px;color:#4b5563">Dự kiến</div>
<div class="a" style="left:132.80px;top:179.70px;width:5.6px;height:5.6px;border-radius:2.8px;background:#45ab9f"></div>
<div class="a nw" style="left:140.40px;top:178.50px;font-size:5.4px;line-height:8px;color:#4b5563">Đã chốt</div>
<div class="a" style="left:132.80px;top:188.00px;width:5.6px;height:5.6px;border-radius:2.8px;background:#3a908c"></div>
<div class="a nw" style="left:140.40px;top:186.80px;font-size:5.4px;line-height:8px;color:#4b5563">Đã diễn ra</div>
<div class="a" style="left:132.80px;top:196.30px;width:5.6px;height:5.6px;border-radius:2.8px;background:#6bbcb3"></div>
<div class="a nw" style="left:140.40px;top:195.10px;font-size:5.4px;line-height:8px;color:#4b5563">Hoàn tất</div>
<div class="a" style="left:132.80px;top:204.60px;width:5.6px;height:5.6px;border-radius:2.8px;background:#61a9a5"></div>
<div class="a nw" style="left:140.40px;top:203.40px;font-size:5.4px;line-height:8px;color:#4b5563">Hoãn/Đổi lịch</div>
<div class="a" style="left:132.80px;top:212.90px;width:5.6px;height:5.6px;border-radius:2.8px;background:#8dcec5"></div>
<div class="a nw" style="left:140.40px;top:211.70px;font-size:5.4px;line-height:8px;color:#4b5563">Huỷ</div>
<div class="a" style="left:215.50px;top:149.50px;width:202.5px;height:150px;border-radius:8px;background:#fff;box-shadow:0 1px 3px rgba(0,0,0,.06)"></div>
<div class="a nw" style="left:220.80px;top:155.70px;font-size:6.5px;line-height:8px;font-weight:700;color:#1f2937;-webkit-text-stroke:0.15px #1f2937">Loại lịch</div>
<div class="a nw" style="left:365.50px;top:155.70px;width:48px;text-align:right;font-size:5.75px;line-height:8px;color:#7d8a90">Biểu đồ tròn</div>
<svg class="a" style="left:219.80px;top:164.80px" width="120" height="120" viewBox="419.8 242.3 120 120" font-family="Liberation Sans"><path d="M479.80 248.80A53.5 53.5 0 1 1 448.35 345.58L462.58 326.00A29.3 29.3 0 1 0 479.80 273.00Z" fill="#1e7b7b" stroke="#fff" stroke-width="0.8" stroke-linejoin="round"/><path d="M448.35 345.58A53.5 53.5 0 0 1 479.80 248.80L479.80 273.00A29.3 29.3 0 0 0 462.58 326.00Z" fill="#46ab9f" stroke="#fff" stroke-width="0.8" stroke-linejoin="round"/><text x="520.98" y="316.78" text-anchor="middle" font-size="5.2" font-weight="700" fill="#fff">60%</text><text x="438.62" y="290.02" text-anchor="middle" font-size="5.2" font-weight="700" fill="#fff">40%</text></svg>
<div class="a" style="left:342.30px;top:171.40px;width:5.6px;height:5.6px;border-radius:2.8px;background:#1e7b7b"></div>
<div class="a nw" style="left:349.90px;top:170.20px;font-size:5.4px;line-height:8px;color:#4b5563">Lịch công tác</div>
<div class="a" style="left:342.30px;top:179.70px;width:5.6px;height:5.6px;border-radius:2.8px;background:#46ab9f"></div>
<div class="a nw" style="left:349.90px;top:178.50px;font-size:5.4px;line-height:8px;color:#4b5563">Lịch họp</div>
</div>
<div class="a" style="left:626px;top:80px;width:0;height:0;border-left:3px solid transparent;border-right:3px solid transparent;border-bottom:3.5px solid #7f7f7f"></div>
<div class="a" style="left:626.6px;top:87px;width:4.4px;height:162.75px;border-radius:2.2px;background:#7f7f7f"></div>
<div class="a" style="left:626px;top:350px;width:0;height:0;border-left:3px solid transparent;border-right:3px solid transparent;border-top:3.5px solid #7f7f7f"></div>
</div></body></html>
